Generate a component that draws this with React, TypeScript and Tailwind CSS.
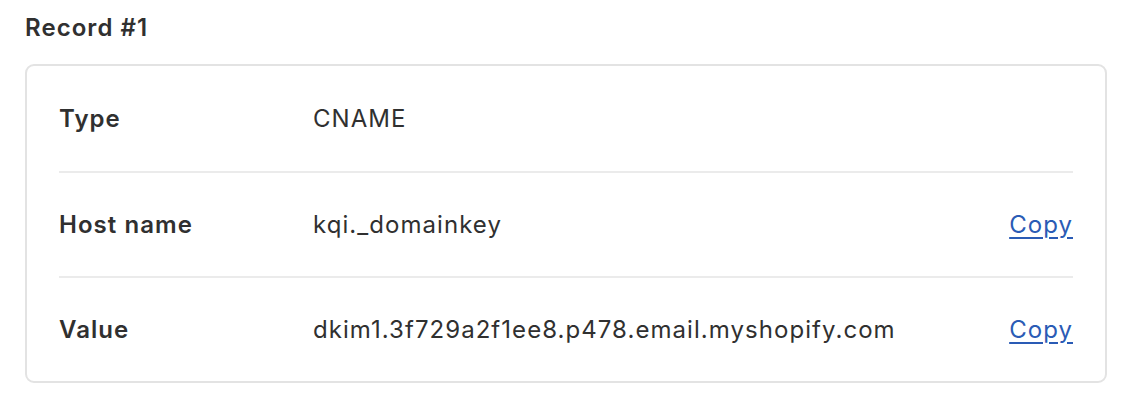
const rows = [
  { label: 'Type', value: 'CNAME', copy: false },
  { label: 'Host name', value: 'kqi._domainkey', copy: true },
  { label: 'Value', value: 'dkim1.3f729a2f1ee8.p478.email.myshopify.com', copy: true },
];

export default function App() {
  return (
    <div className="min-h-[412px] bg-white px-[25px] pt-[12px] font-['Inter','Liberation_Sans',sans-serif] text-[#303030] tracking-[1.05px]">
      <h2 className="text-[24px] leading-[32px] font-semibold">Record #1</h2>
      <div className="mt-[20px] w-[1082px] rounded-[9px] border-2 border-[#e3e3e3] px-[32px]">
        {rows.map((row, i) => (
          <div
            key={row.label}
            className={`flex h-[105px] items-center text-[24px] leading-[32px] ${i > 0 ? 'border-t-2 border-[#ebebeb]' : ''}`}
          >
            <div className="w-[254px] font-semibold">{row.label}</div>
            <div className="flex-1">{row.value}</div>
            {row.copy && (
              <button className="tracking-[1.05px] text-[#2a5bb5] underline underline-offset-[4px] decoration-[2px]">Copy</button>
            )}
          </div>
        ))}
      </div>
    </div>
  );
}
